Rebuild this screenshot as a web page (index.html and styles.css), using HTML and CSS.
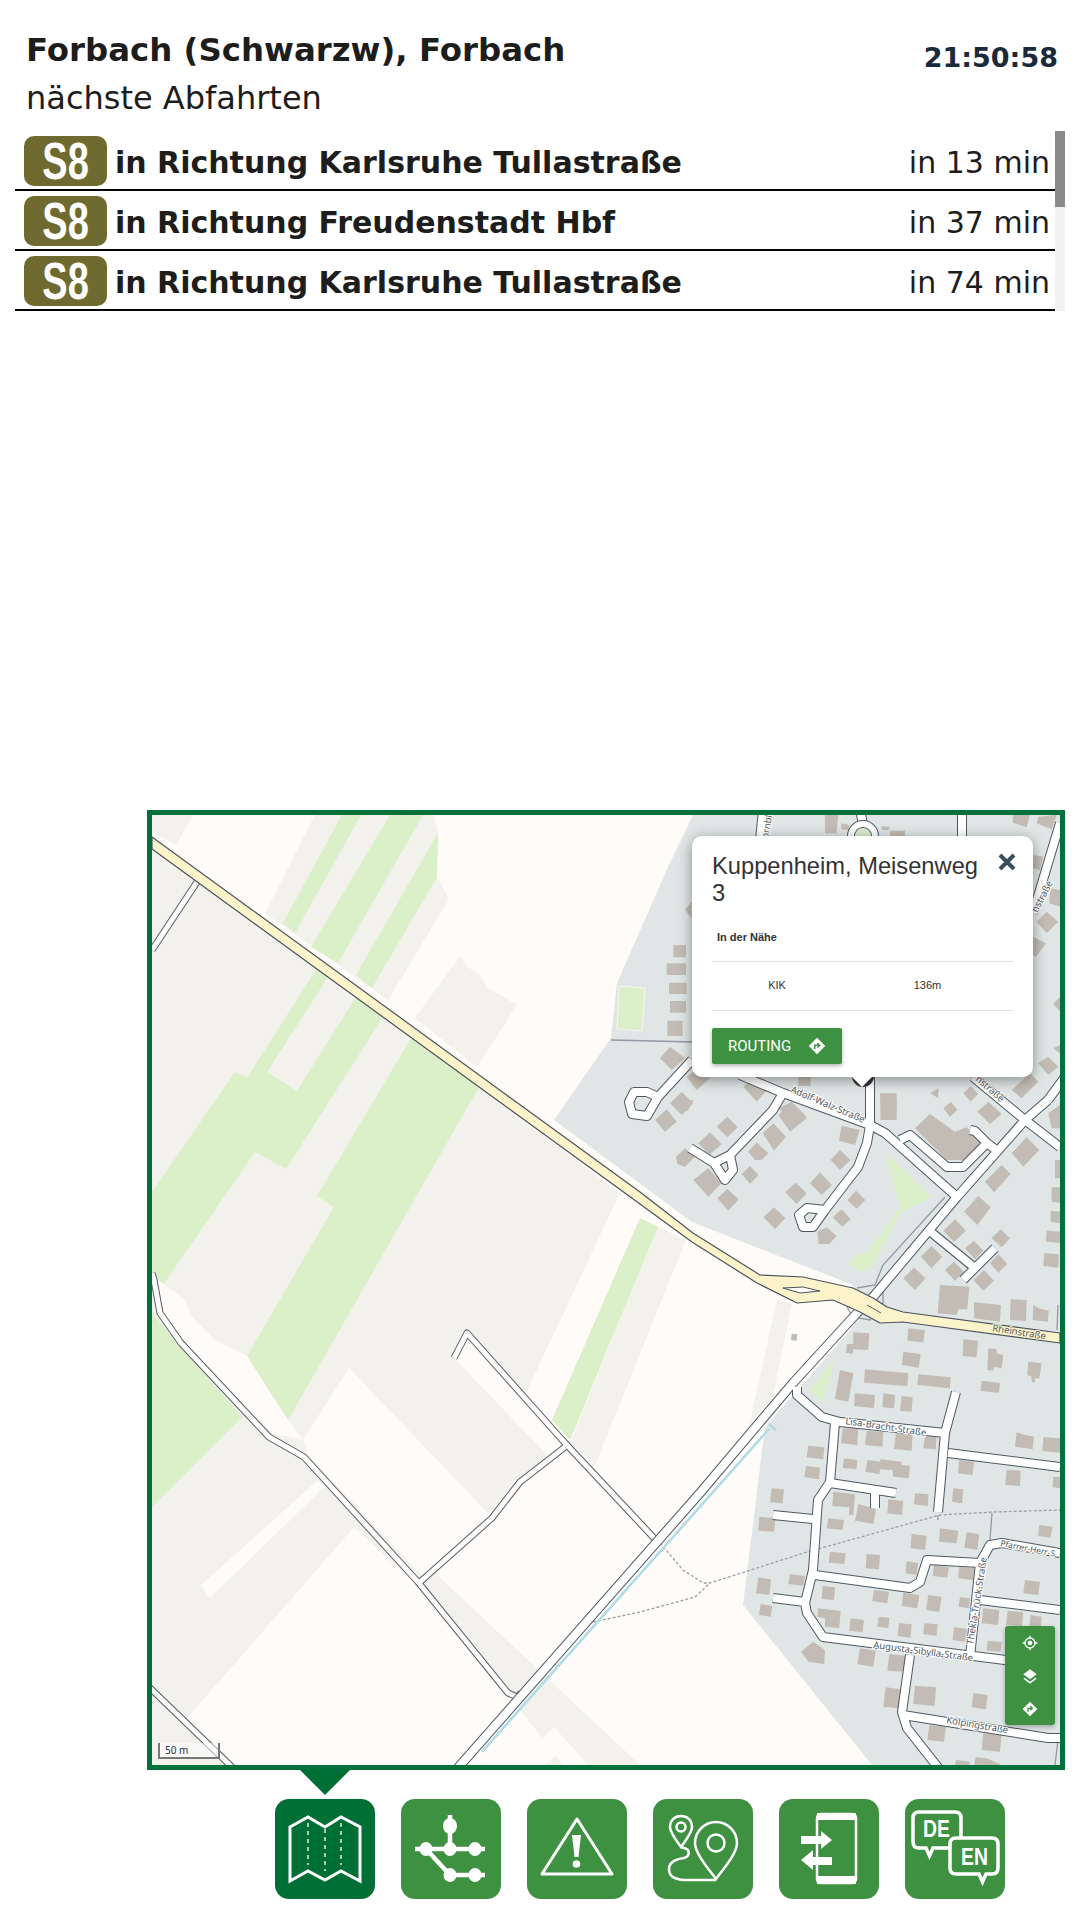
FILE: index.html
```html
<!DOCTYPE html>
<html>
<head>
    <title>Forbach (Schwarzw), Forbach</title>
    <link rel="stylesheet" href="styles.css">
</head>
<body>
    <div class="header">
        <div>
            <div class="stop-name">Forbach (Schwarzw), Forbach</div>
            <div class="stop-sub">nächste Abfahrten</div>
        </div>
        <div class="clock">21:50:58</div>
    </div>

    <div class="departures">
        <div class="rows">
            <div class="row">
                <span class="line-badge"><span>S8</span></span>
                <span class="direction">in Richtung Karlsruhe Tullastraße</span>
                <span class="eta">in 13 min</span>
            </div>
            <div class="row">
                <span class="line-badge"><span>S8</span></span>
                <span class="direction">in Richtung Freudenstadt Hbf</span>
                <span class="eta">in 37 min</span>
            </div>
            <div class="row">
                <span class="line-badge"><span>S8</span></span>
                <span class="direction">in Richtung Karlsruhe Tullastraße</span>
                <span class="eta">in 74 min</span>
            </div>
        </div>
        <div class="scroll-track"><div class="scroll-thumb"></div></div>
    </div>

    <div class="map">
        <svg class="map-canvas" viewBox="152 815 908 950" width="908" height="950">
            <defs>
                <path id="streets" d="M692 1060 658 1097 647 1092 634 1092 629 1102 632 1114 647 1116 658 1097
                    M783 1093 773 1110 730 1155 714 1163 690 1148 M730 1155 733 1170 725 1180 714 1163
                    M740 1075 783 1093 870 1125 885 1133 957 1197
                    M870 1077 870 1125 867 1143 858 1167 825 1210 807 1208 799 1215 803 1227 813 1227 825 1210
                    M900 1140 910 1135 947 1167 963 1167 987 1143 975 1131 970 1130 M987 1143 1000 1153
                    M973 1077 1025 1120 1060 1147
                    M932 1233 975 1268 995 1248 M975 1268 963 1280
                    M797 1387 797 1395 822 1417 840 1422 945 1433
                    M956 1392 945 1433 938 1512
                    M948 1453 1060 1467
                    M835 1423 830 1482 818 1500 813 1570 805 1603 807 1613 823 1637 1045 1665
                    M830 1483 896 1493 M875 1493 875 1508
                    M773 1515 813 1519 M773 1598 805 1602
                    M815 1575 910 1588 920 1582 927 1560 980 1563 990 1545 1002 1543 1060 1553
                    M980 1563 970 1657 M980 1600 1060 1610
                    M910 1655 902 1712 907 1728 940 1770 M903 1715 1048 1738 1060 1738
                    M962 810 962 840 M763 810 760 840 M860 810 863 824 M1060 823 1033 913
                    M1048 1100 1025 1120 957 1197 873 1297 857 1313 793 1383 700 1493 456 1770 M1048 1100 1065 1077"/>
                <path id="lanes" d="M197 882 152 950
                    M152 1273 154 1280 160 1313 181 1343 269 1437 304 1457 418 1582 508 1693 517 1697 521 1693
                    M420 1582 492 1518 520 1482 565 1447
                    M454 1358 467 1333 565 1443 654 1538 660 1541
                    M148 1686 235 1770"/>
            </defs>

            <rect class="land" x="152" y="815" width="908" height="950"/>

            <g class="farm">
                <polygon points="152,815 193,815 176,845 152,832"/>
                <polygon points="315,815 434,815 438,833 437,877 449,899 388,1000 265,913"/>
                <polygon points="460,956 467,967 479,973 488,988 517,1005 477,1067 415,1018"/>
                <polygon points="152,843 620,1193 525,1395 548,1455 488,1513 422,1590 354,1527 188,1717 236,1765 152,1765"/>
                <polygon points="658,1227 686,1240 595,1465 570,1443"/>
                <polygon points="435,1573 640,1765 588,1765 554,1727 542,1738 424,1585"/>
                <polygon points="545,1765 556,1755 563,1765"/>
                <polygon points="777,1300 792,1303 768,1420 748,1430"/>
            </g>
            <g class="meadow">
                <polygon points="342,815 361,815 295,933 283,923"/>
                <polygon points="390,815 423,815 338,963 311,947"/>
                <polygon points="438,833 437,877 372,988 356,975"/>
                <polygon points="317,968 247,1078 235,1072 152,1192 152,1273 163,1285 255,1152 286,1169 383,1017 356,997 297,1091 267,1072 328,977"/>
                <polygon points="413,1035 317,1196 334,1207 247,1356 288,1420 479,1087"/>
                <polygon points="152,1313 179,1345 242,1417 152,1507"/>
                <polygon points="640,1218 658,1227 570,1440 552,1420"/>
            </g>
            <g class="land">
                <polygon points="158,1280 185,1300 192,1317 215,1340 247,1356 288,1420 303,1440 270,1433 183,1342 163,1313 154,1280"/>
                <polygon points="349,1368 488,1513 426,1580 308,1455 303,1440"/>
                <polygon points="318,1480 201,1585 210,1598 324,1487"/>
                <polygon points="456,1360 547,1455 563,1443 468,1338"/>
            </g>

            <polygon class="residential" points="693,815 668,867 617,983 611,1038 554,1120 692,1222 853,1285 860,1300 853,1327 765,1427 743,1605 872,1765 1060,1765 1060,815"/>
            <g class="meadow">
                <polygon class="pitch" points="619,986 645,988 642,1031 617,1029"/>
                <polygon points="885,1152 932,1197 900,1213 872,1267 860,1272 848,1263 857,1255 868,1252 900,1207"/>
                <polygon points="835,1357 810,1390 823,1403"/>
                <circle cx="863" cy="835" r="7"/>
            </g>

            <g class="buildings">
                <path transform="translate(660 800) scale(.3333)" d="M40 435 78 435 78 472 40 472z M20 490 78 490 78 525 20 525z M27 548 80 548 80 582 27 582z M30 603 78 603 78 638 30 638z M22 662 68 662 68 708 22 708z M75 330 95 305 95 355z
                    M0 775 30 740 75 775 35 810z M80 830 115 805 150 835 110 870z M250 860 290 825 330 860 290 905z M415 830 452 830 452 858 415 858z M30 910 65 875 100 910 65 945z M355 925 395 905 440 950 400 965z
                    M660 880 710 880 710 960 662 960z M810 880 835 865 835 895z M910 880 932 858 955 882 932 905z M850 925 872 905 892 930 870 950z M1055 870 1110 820 1135 845 1085 895z M1135 790 1165 770 1195 800 1165 825z
                    M1135 50 1190 45 1175 88 1130 70z M1060 45 1110 45 1100 82 1058 68z M495 45 535 45 530 100 495 100z M545 70 568 75 565 90 543 88z M665 78 690 80 685 90 665 90z M690 92 735 92 735 108 690 108z
                    M1120 165 1150 170 1140 210 1118 205z M1172 265 1200 270 1200 320 1168 310z M1130 365 1160 335 1195 365 1160 400z M1118 410 1158 430 1128 470 1118 465z M1180 612 1200 590 1200 635z M1180 745 1200 735 1200 760z"/>
                <path transform="translate(640 1100) scale(.3333)" d="M730 0 770 0 768 55 722 50z M415 45 455 10 500 55 450 95z M45 60 80 28 110 65 75 95z M95 10 160 0 145 30 125 42z M230 80 262 50 293 82 262 112z M175 130 210 97 245 132 208 165z M368 100 400 70 438 110 402 152z
                    M605 77 660 90 645 135 597 122z M572 180 600 150 632 180 600 210z M325 155 350 127 385 160 365 180 345 180z M305 222 330 198 356 225 330 252z M108 170 135 145 165 170 135 200 112 192z M160 240 205 205 245 250 205 290z M232 295 262 267 296 298 265 332z
                    M510 250 540 217 576 255 545 285z M436 277 467 248 500 280 470 312z M370 352 402 322 436 355 405 387z M622 300 648 272 676 300 650 326z M578 352 605 328 632 358 607 380z M532 395 560 382 590 408 568 432 536 432z
                    M825 85 870 42 945 95 980 82 1025 125 970 180 920 180z M915 25 935 8 952 30 932 48z M1012 35 1045 5 1085 42 1050 72z M1115 160 1160 112 1198 150 1150 200z M1035 245 1085 195 1112 222 1062 277z M972 335 1015 288 1053 322 1012 375z M910 392 945 358 978 392 942 426z
                    M975 445 1002 422 1030 452 1005 478z M1055 415 1082 388 1110 415 1085 442z M842 470 875 438 907 470 875 505z M915 510 942 485 972 515 945 543z M1050 490 1075 462 1102 492 1075 518z M790 535 822 503 857 535 825 570z M1000 540 1032 510 1062 542 1030 572z
                    M900 555 988 560 982 628 955 628 950 645 893 640z M1002 607 1083 615 1080 665 1003 655z M1112 598 1160 600 1158 663 1110 660z M1180 615 1197 625 1226 632 1224 665 1178 660z
                    M1245 180 1260 180 1260 235 1245 235z M1235 262 1260 262 1260 308 1235 305z M1232 332 1260 335 1260 370 1232 365z M1220 392 1260 395 1260 428 1218 425z M1213 460 1257 463 1255 503 1210 498z M1225 40 1260 15 1260 85 1235 85z
                    M640 697 688 700 685 750 640 748 638 762 618 758 620 732 640 732z M805 685 855 690 850 727 802 722z M970 718 1014 722 1010 772 968 768z M790 755 842 762 836 803 786 795z M1045 745 1070 748 1070 760 1090 765 1085 805 1062 800 1060 812 1042 810z
                    M1165 785 1205 790 1198 835 1185 835 1185 848 1175 845 1175 830 1162 825z M1025 842 1080 848 1077 878 1022 873z M600 810 640 820 625 905 585 897z M675 808 805 820 802 858 672 848z M835 823 932 832 930 865 832 855z M645 880 705 885 702 925 642 918z
                    M730 880 765 885 762 925 727 922z M785 888 818 892 815 935 780 932z M455 702 472 702 470 722 453 720z"/>
                <path transform="translate(640 1400) scale(.3333)" d="M608 85 655 85 652 135 603 130z M680 92 730 95 727 140 675 135z M768 98 818 103 815 152 762 147z M855 107 890 110 887 148 850 145z M505 137 553 142 550 178 500 172z M498 198 540 203 537 238 493 232z M612 175 652 180 650 208 608 204z
                    M682 180 720 185 722 178 785 185 785 195 810 197 806 235 760 230 758 210 720 208 718 222 676 215z M1130 97 1155 105 1182 110 1178 148 1125 140z M1210 112 1260 115 1260 158 1207 153z M958 180 1002 185 998 225 954 220z M1100 210 1142 212 1140 258 1096 255z M1240 230 1260 232 1260 265 1238 262z
                    M395 265 432 268 428 310 390 307z M825 280 866 283 863 318 822 313z M940 265 970 268 966 310 936 305z M580 275 645 283 640 345 628 345 628 322 577 318z M655 312 708 328 700 372 645 362z M745 298 790 303 786 345 742 340z M565 355 612 360 608 390 560 385z M358 350 407 355 402 395 355 392z
                    M570 455 617 460 613 492 566 488z M680 462 720 465 717 508 677 505z M815 402 860 407 855 450 812 445z M900 385 955 392 950 430 897 425z M980 397 1018 403 1012 450 973 443z M800 484 835 490 830 525 797 520z M882 495 927 502 922 533 878 528z M957 500 1003 505 1000 540 955 535z
                    M1198 375 1238 380 1232 413 1195 408z M1155 540 1200 545 1195 585 1150 580z M450 522 495 528 490 557 445 552z M355 532 393 538 388 585 348 580z M362 612 397 618 392 650 357 645z M548 558 585 562 582 600 545 597z M702 570 747 575 742 610 697 604z M790 578 838 585 832 625 785 618z
                    M865 585 905 590 898 636 858 630z M960 592 990 595 987 625 956 620z M535 625 602 633 598 685 555 680 555 655 532 650z M632 655 672 660 668 697 628 692z M716 650 748 653 745 684 712 680z M777 670 815 673 812 713 773 708z M853 670 893 673 890 707 850 702z M942 682 980 686 976 725 938 720z
                    M1030 625 1078 630 1074 675 1025 670z M1103 632 1150 637 1146 680 1098 675z M1172 645 1205 650 1202 685 1168 682z M1043 722 1085 726 1082 755 1040 752z M520 725 555 750 553 792 505 785 483 755z M660 745 707 752 700 800 652 793z M748 762 800 768 795 815 742 812z
                    M737 862 780 867 775 925 730 920z M825 857 888 862 884 918 820 912z M1000 880 1043 885 1038 928 995 922z M868 975 918 980 912 1025 862 1020z M1030 1000 1085 1005 1080 1055 1025 1050z M948 1080 990 1085 988 1095 945 1095z M1007 1072 1040 1075 1085 1095 1003 1095z"/>
            </g>

            <path class="thin-way" d="M611 1040 695 1042 M945 1197 883 1265 875 1285 857 1288 M883 1290 883 1303 870 1320 853 1317 847 1307 M992 1513 990 1540 M938 1515 938 1520 M1058 1305 1057 1330 M1058 1740 1055 1765"/>
            <path class="footway" d="M660 1543 683 1570 703 1583 710 1583 807 1552 940 1515 993 1512 1060 1510 M593 1622 640 1612 695 1597 710 1583"/>

            <use href="#lanes" class="lane-casing"/>
            <use href="#lanes" class="lane-fill"/>
            <use href="#streets" class="street-casing"/>
            <use href="#streets" class="street-fill"/>
            <circle class="ring-casing" cx="863" cy="836" r="12"/>
            <circle class="ring-fill" cx="863" cy="836" r="12"/>
            <path class="stream" d="M769 1429 482 1752 M769 1424 776 1430"/>

            <polygon class="primary" points="152,837 640,1192 693,1233 760,1275 803,1277 853,1288 873,1298 887,1307 903,1312 1060,1333 1060,1343 903,1322 880,1323 860,1312 833,1300 797,1303 757,1283 692,1242 640,1204 152,849"/>
            <polygon class="island" points="783,1288 803,1287 820,1291 800,1293"/>
            <path class="thin-dark" d="M867 1305 881 1313"/>

            <g class="labels">
                <text transform="translate(790 1092) rotate(23)">Adolf-Walz-Straße</text>
                <text transform="translate(845 1424) rotate(8.5)">Lisa-Bracht-Straße</text>
                <text class="label-primary" transform="translate(992 1331) rotate(9)">Rheinstraße</text>
                <text class="label-tight" transform="translate(1000 1546) rotate(11)">Pfarrer-Herr-S</text>
                <text transform="translate(973 1645) rotate(-81)">Thekla-Trück-Straße</text>
                <text transform="translate(873 1648) rotate(7.5)">Augusta-Sibylla-Straße</text>
                <text transform="translate(946 1723) rotate(9.5)">Kolpingstraße</text>
                <text transform="translate(768 839) rotate(-80)">ornbl</text>
                <text transform="translate(1037 913) rotate(-62)">nstraße</text>
                <text transform="translate(975 1080) rotate(41)">nstraße</text>
            </g>

            <circle class="marker" cx="863" cy="1076" r="11"/>
        </svg>

        <div class="popup">
            <div class="popup-head">
                <span class="popup-title">Kuppenheim, Meisenweg 3</span>
                <svg class="popup-close" viewBox="0 0 20 20" width="20" height="20"><path d="M3 3 17 17 M17 3 3 17"/></svg>
            </div>
            <div class="nearby-title">In der Nähe</div>
            <div class="nearby-row"><span>KIK</span><span>136m</span></div>
            <div class="routing-btn">
                ROUTING
                <svg viewBox="0 0 24 24" width="18" height="18"><path fill="#fff" d="M12 1 23 12 12 23 1 12z"/><path fill="none" stroke="#3d9140" stroke-width="2" d="M9 16v-5h6M12.5 8l3 3-3 3"/></svg>
            </div>
            <div class="popup-tip"></div>
        </div>

        <div class="map-controls">
            <div class="map-btn">
                <svg viewBox="0 0 24 24" width="16" height="16"><circle cx="12" cy="12" r="7.5" fill="none" stroke="#fff" stroke-width="2"/><circle cx="12" cy="12" r="3.5" fill="#fff"/><path stroke="#fff" stroke-width="2" d="M12 1v4M12 19v4M1 12h4M19 12h4"/></svg>
            </div>
            <div class="map-btn">
                <svg viewBox="0 0 24 24" width="16" height="16"><path fill="#fff" d="M12 2 22 9.500 12 17 2 9.500z"/><path fill="#fff" d="M4 14.500 2 16 12 23.500 22 16 20 14.500 12 20.500z"/></svg>
            </div>
            <div class="map-btn">
                <svg viewBox="0 0 24 24" width="16" height="16"><path fill="#fff" d="M12 1 23 12 12 23 1 12z"/><path fill="none" stroke="#3d9140" stroke-width="2" d="M9 16v-5h6M12.500 8l3 3-3 3"/></svg>
            </div>
        </div>

        <div class="scale">50 m</div>
    </div>

    <div class="nav">
        <div class="nav-btn active">
            <svg viewBox="0 0 100 100">
                <path class="ico" d="M15 28 33 18 50 28 66 18 85 28V82L66 72 50 81 33 72 15 82z"/>
                <path class="ico-dash" d="M33 24V66M50 30V72M66 24V66"/>
            </svg>
        </div>
        <div class="nav-btn">
            <svg viewBox="0 0 100 100">
                <path class="ico ico-bold" d="M14 50H84M49 16V50M25 50 49 76H84"/>
                <g class="ico-fill">
                    <ellipse cx="49" cy="27" rx="7" ry="8"/>
                    <ellipse cx="25" cy="50" rx="6.500" ry="7"/>
                    <ellipse cx="49" cy="50" rx="6.500" ry="7"/>
                    <ellipse cx="74" cy="50" rx="6.500" ry="7"/>
                    <ellipse cx="49" cy="76" rx="6.500" ry="7"/>
                    <ellipse cx="74" cy="76" rx="6.500" ry="7"/>
                </g>
            </svg>
        </div>
        <div class="nav-btn">
            <svg viewBox="0 0 100 100">
                <path class="ico" stroke-linejoin="round" d="M50 20 85 75H15z"/>
                <g class="ico-fill">
                    <path d="M45 36H54L51.500 58H47.500z"/>
                    <circle cx="49.500" cy="65" r="3.800"/>
                </g>
            </svg>
        </div>
        <div class="nav-btn">
            <svg viewBox="0 0 100 100">
                <path class="ico-thin" d="M28 48C22 40 17 33 17 28 17 21 22 17 28 17S39 21 39 28C39 33 34 40 28 48z"/>
                <circle class="ico-thin" cx="28" cy="28" r="4.500"/>
                <path class="ico-thin" d="M63 80C54 68 42 54 42 44 42 32 52 23 63 23S84 32 84 44C84 54 72 68 63 80z"/>
                <circle class="ico-thin" cx="63" cy="44" r="8.500"/>
                <path class="ico-thin" d="M28 48 34 50C37 53 36 58 31 59 24 60 16 62 16 70 16 78 22 80 30 81H63"/>
            </svg>
        </div>
        <div class="nav-btn">
            <svg viewBox="0 0 100 100">
                <rect class="ico-thin" x="38" y="15" width="39" height="69" rx="4"/>
                <g class="ico-fill">
                    <path d="M38 14H77V21H38zM38 77H77V85H38z"/>
                    <path d="M22 37H42V32L53 41 42 50V45H22z"/>
                    <path d="M22 61 34 51V58H53V66H34V71z"/>
                </g>
            </svg>
        </div>
        <div class="nav-btn">
            <svg viewBox="0 0 100 100">
                <path class="ico ico-bubble" d="M14 13H50Q56 13 56 19V43Q56 49 50 49H28L24.500 57 21 49H14Q8 49 8 43V19Q8 13 14 13z"/>
                <path class="ico ico-bubble" d="M51 39H87Q93 39 93 45V69Q93 75 87 75H81L77.500 83 74 75H51Q45 75 45 69V45Q45 39 51 39z"/>
                <text class="ico-text" x="18" y="38" textLength="27" lengthAdjust="spacingAndGlyphs">DE</text>
                <text class="ico-text" x="56" y="66" textLength="27" lengthAdjust="spacingAndGlyphs">EN</text>
            </svg>
        </div>
    </div>
</body>
</html>
```

FILE: styles.css
```css
html, body {
  margin: 0;
  height: 1920px;
  overflow: hidden;
  background-color: #fff;
}

body {
  font-family: "DejaVu Sans", sans-serif;
  color: #1d1d1b;
}

.header {
  display: flex;
  justify-content: space-between;
  height: 131px;
  box-sizing: border-box;
  padding: 30px 22px 0 26px;
}

.stop-name {
  font-size: 32.400px;
  font-weight: bold;
  line-height: 40px;
}

.stop-sub {
  font-size: 32px;
  line-height: 36px;
  margin-top: 10px;
}

.clock {
  font-size: 27px;
  font-weight: bold;
  color: #1b2a3a;
  margin-top: 12px;
}

.departures {
  display: flex;
  height: 180px;
  margin-left: 15px;
}

.rows {
  width: 1040px;
}

.row {
  display: flex;
  align-items: center;
  height: 60px;
  box-sizing: border-box;
  border-bottom: 2px solid #000;
  padding: 0 5px 0 9px;
  font-size: 30px;
}

.line-badge {
  display: flex;
  justify-content: center;
  width: 83px;
  height: 50px;
  margin-top: 1px;
  border-radius: 10px;
  background-color: #6f6a30;
  color: #fff;
  font-family: "Liberation Sans", sans-serif;
  font-size: 50px;
  font-weight: bold;
  line-height: 50px;
}

.line-badge span {
  display: block;
  transform: scale(.76, 1.04);
}

.direction {
  margin: 4px 0 0 8px;
  font-weight: bold;
}

.eta {
  margin: 4px 0 0 auto;
}

.scroll-track {
  width: 10px;
  background-color: #f1f1f1;
}

.scroll-thumb {
  height: 76px;
  background-color: #8a8a8a;
}

.map {
  position: relative;
  width: 918px;
  height: 960px;
  box-sizing: border-box;
  margin: 499px 0 0 147px;
  border: 5px solid #00713a;
  overflow: hidden;
}

.map-canvas {
  display: block;
}

.land { fill: #fefbf8; }
.farm { fill: #f2f1ec; }
.meadow { fill: #dbefc8; }
.residential { fill: #e0e6e6; }
.buildings { fill: #c2bcb4; }
.pitch { stroke: #f4f7f2; stroke-width: 1; }

.stream {
  fill: none;
  stroke: #aedbe8;
  stroke-width: 2.500;
}

.thin-way {
  fill: none;
  stroke: #8f9aa2;
  stroke-width: 1.3;
}

.thin-dark {
  fill: none;
  stroke: #56606a;
  stroke-width: 1;
}

.footway {
  fill: none;
  stroke: #9aa0a4;
  stroke-width: 1.3;
  stroke-dasharray: 3 2;
}

.street-casing, .street-fill, .lane-casing, .lane-fill, .ring-casing, .ring-fill {
  fill: none;
  stroke-linejoin: round;
}

.street-casing { stroke: #4e5862; stroke-width: 10; }
.street-fill { stroke: #fff; stroke-width: 8; }
.lane-casing { stroke: #555e68; stroke-width: 7; }
.lane-fill { stroke: #fefdfb; stroke-width: 5; }
.ring-casing { stroke: #4e5862; stroke-width: 8; }
.ring-fill { stroke: #fff; stroke-width: 6; }

.primary {
  fill: #fdf3cb;
  stroke: #4a545e;
  stroke-width: 1.200;
  stroke-linejoin: round;
}

.island {
  fill: #fefbf8;
  stroke: #4a545e;
  stroke-width: 1;
}

.labels text {
  font-family: "Noto Sans", sans-serif;
  font-size: 9.500px;
  fill: #4f5a64;
  stroke: #fff;
  stroke-width: 2;
  paint-order: stroke;
}

.labels .label-primary {
  stroke: #fdf3cb;
}

.labels .label-tight {
  font-size: 8.400px;
}

.marker {
  fill: #333;
}

/* popup over the map */
.popup {
  position: absolute;
  left: 540px;
  top: 21px;
  width: 341px;
  height: 241px;
  box-sizing: border-box;
  padding: 17px 20px;
  background-color: #fff;
  border-radius: 10px;
  box-shadow: 0 3px 14px rgba(0,0,0,0.4);
  font-family: "Liberation Sans", sans-serif;
  color: #333;
}

.popup-head {
  display: flex;
  justify-content: space-between;
  align-items: flex-start;
}

.popup-title {
  width: 270px;
  font-size: 23.700px;
  line-height: 27px;
}

.popup-close {
  margin: -1px -4px 0 0;
  fill: none;
  stroke: #37505f;
  stroke-width: 4;
}

.nearby-title {
  height: 39px;
  box-sizing: border-box;
  margin-top: 16px;
  padding: 7px 0 0 5px;
  border-bottom: 1px solid #ddd;
  font-size: 11px;
  font-weight: bold;
  line-height: 14px;
}

.nearby-row {
  display: grid;
  grid-template-columns: 130px 1fr;
  height: 48px;
  border-bottom: 1px solid #ddd;
  font-size: 11px;
  line-height: 47px;
  text-align: center;
}

.routing-btn {
  display: flex;
  align-items: center;
  justify-content: space-between;
  width: 130px;
  height: 36px;
  box-sizing: border-box;
  margin-top: 17px;
  padding: 0 16px;
  background-color: #3d9140;
  border-radius: 2px;
  box-shadow: 0 2px 4px rgba(0,0,0,0.3);
  color: #fff;
  font-family: Roboto, sans-serif;
  font-size: 15px;
}

.popup-tip {
  position: absolute;
  left: 160px;
  bottom: -10px;
  border-left: 10px solid transparent;
  border-right: 10px solid transparent;
  border-top: 10px solid #fff;
}

.map-controls {
  position: absolute;
  right: 5px;
  bottom: 40px;
  width: 50px;
  border-radius: 3px;
  box-shadow: 0 2px 5px rgba(0,0,0,0.3);
  overflow: hidden;
}

.map-btn {
  display: flex;
  align-items: center;
  justify-content: center;
  height: 33px;
  background-color: #3d9140;
}

.scale {
  position: absolute;
  left: 6px;
  bottom: 6px;
  width: 53px;
  height: 14px;
  padding-left: 5px;
  border: 2px solid #777;
  border-top: none;
  background-color: rgba(255,255,255,0.5);
  font-family: "Noto Sans", sans-serif;
  font-size: 10px;
  line-height: 14px;
  color: #333;
}

.nav {
  display: flex;
  gap: 26px;
  margin: 29px 0 0 275px;
}

.nav-btn {
  position: relative;
  width: 100px;
  height: 100px;
  border-radius: 14px;
  background-color: #3d9140;
}

.nav-btn svg {
  display: block;
}

.nav-btn.active {
  background-color: #006f35;
}

.nav-btn.active::before {
  content: "";
  position: absolute;
  left: 25px;
  bottom: 104px;
  border-left: 25px solid transparent;
  border-right: 25px solid transparent;
  border-top: 25px solid #006f35;
}

.ico {
  fill: none;
  stroke: #fff;
  stroke-width: 3;
}

.ico-bold {
  stroke-width: 4.500;
}

.ico-bubble {
  fill: #3d9140;
  stroke-width: 3.500;
}

.ico-thin {
  fill: none;
  stroke: #fff;
  stroke-width: 2.500;
}

.ico-dash {
  fill: none;
  stroke: #fff;
  stroke-width: 1.300;
  stroke-dasharray: 4 4;
}

.ico-fill {
  fill: #fff;
}

.ico-text {
  fill: #fff;
  font-family: "Liberation Sans", sans-serif;
  font-size: 23px;
  font-weight: bold;
}
```
